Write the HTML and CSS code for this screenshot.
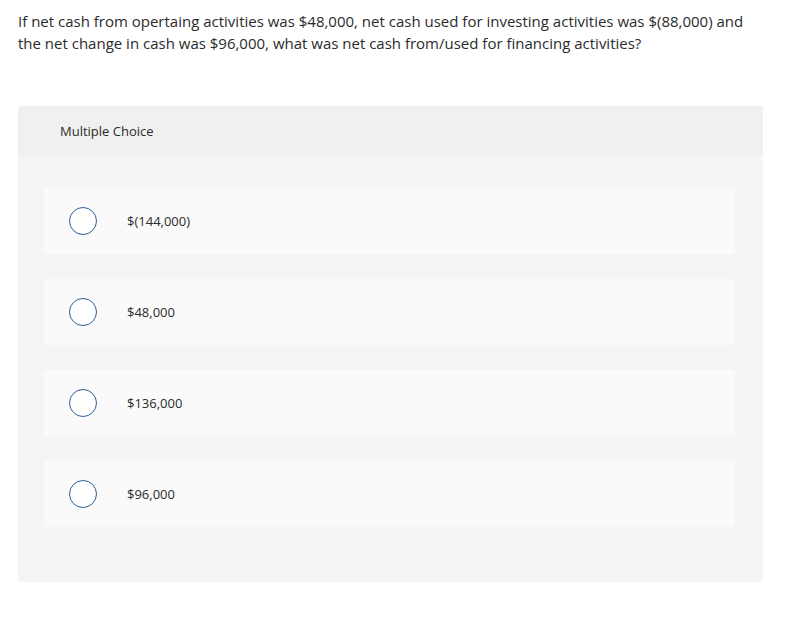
FILE: index.html
```html
<!DOCTYPE html>
<html>
<head>
<meta charset="utf-8">
<link rel="stylesheet" href="styles.css">
</head>
<body>
<div class="page">
  <p class="question">If net cash from opertaing activities was $48,000, net cash used for investing activities was $(88,000) and the net change in cash was $96,000, what was net cash from/used for financing activities?</p>
  <div class="card">
    <div class="card-head">Multiple Choice</div>
    <div class="card-body">
      <div class="option"><span class="radio"></span><span class="label">$(144,000)</span></div>
      <div class="option"><span class="radio"></span><span class="label">$48,000</span></div>
      <div class="option"><span class="radio"></span><span class="label">$136,000</span></div>
      <div class="option"><span class="radio"></span><span class="label">$96,000</span></div>
    </div>
  </div>
</div>
</body>
</html>
```
FILE: styles.css
```css
html, body {
  margin: 0;
  padding: 0;
  background: #ffffff;
}
.page {
  padding: 10px 45px 0 18px;
  font-family: "Open Sans", "Liberation Sans", sans-serif;
  color: #333333;
}
.question {
  margin: 0;
  font-size: 15px;
  line-height: 22px;
  color: #2b2b2b;
}
.card {
  margin-top: 52px;
  background: #f5f5f5;
  border-radius: 3px;
  overflow: hidden;
}
.card-head {
  height: 50px;
  background: #f0f0f0;
  display: flex;
  align-items: center;
  padding-left: 42px;
  font-size: 13px;
  color: #2b2b2b;
}
.card-body {
  padding: 32px 28px 55px 26px;
  display: flex;
  flex-direction: column;
  gap: 25px;
}
.option {
  height: 66px;
  background: #fafafa;
  border-radius: 3px;
  display: flex;
  align-items: center;
  padding-left: 25px;
}
.radio {
  flex: none;
  width: 28px;
  height: 28px;
  border: 1.5px solid #2e5f92;
  border-radius: 50%;
  background: #ffffff;
  box-sizing: border-box;
}
.label {
  margin-left: 30px;
  font-size: 13px;
  color: #2b2b2b;
}
```
